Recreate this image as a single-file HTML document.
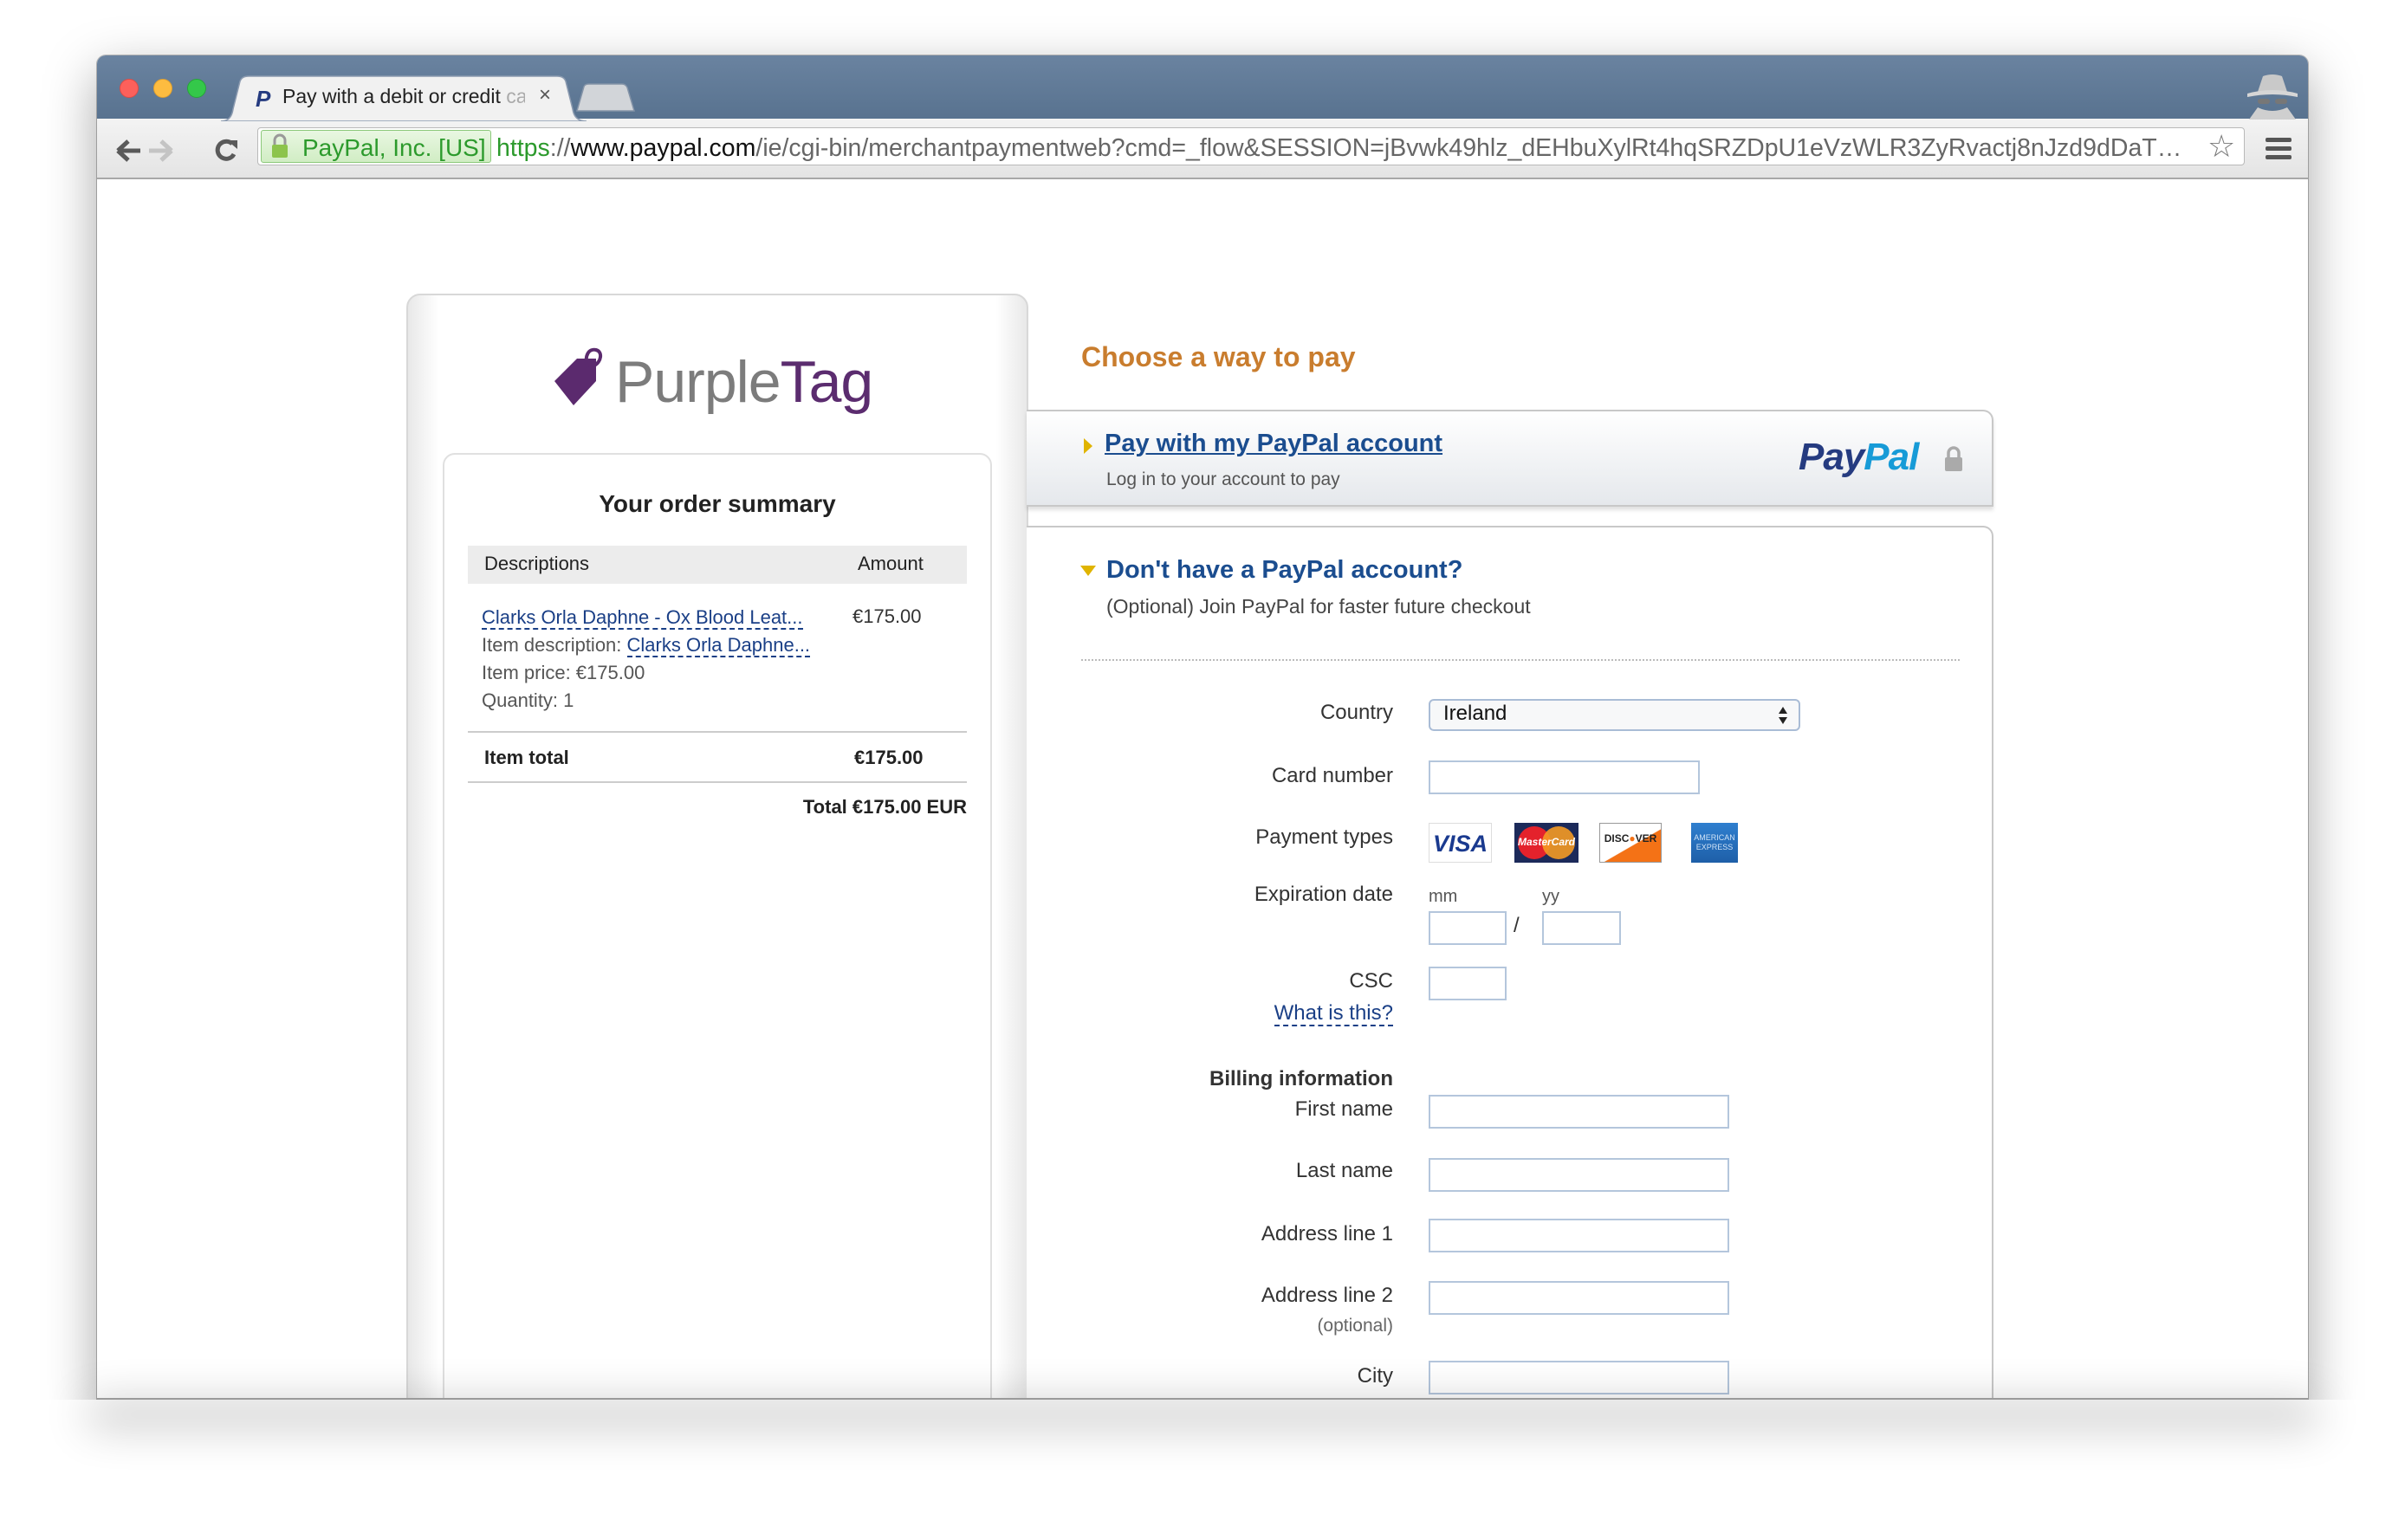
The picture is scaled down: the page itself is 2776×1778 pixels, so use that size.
<!DOCTYPE html>
<html><head><meta charset="utf-8"><style>
*{margin:0;padding:0;box-sizing:border-box}
body{width:2776px;height:1778px;background:#fff;font-family:"Liberation Sans",Arial,sans-serif;position:relative;overflow:hidden}
.a{position:absolute}
.win{left:112px;top:64px;width:2552px;height:1552px;border-radius:10px 10px 0 0;box-shadow:0 20px 60px rgba(0,0,0,.35),0 0 0 1px rgba(0,0,0,.25);overflow:hidden;background:#fff}
.lbl{position:absolute;right:1168px;font-size:24px;color:#333;text-align:right;white-space:nowrap}
.inp{position:absolute;left:1649px;border:2px solid #b4c6dc;background:#fff}
.lk{color:#1a3f86;border-bottom:2px dashed #1a3f86}
</style></head><body>
<div class="a win">
 <div class="a" style="left:0;top:0;width:2552px;height:74px;background:linear-gradient(#6a83a0,#58728f)"></div>
 <div class="a" style="left:0;top:73px;width:2552px;height:70px;background:linear-gradient(#f3f3f3,#e4e4e4);border-bottom:2px solid #a8a8a8"></div>
</div>
<!-- traffic lights -->
<div class="a" style="left:138px;top:91px;width:22px;height:22px;border-radius:50%;background:#fc605b;border:1px solid #de4a45"></div>
<div class="a" style="left:177px;top:91px;width:22px;height:22px;border-radius:50%;background:#fdbc40;border:1px solid #de9f30"></div>
<div class="a" style="left:216px;top:91px;width:22px;height:22px;border-radius:50%;background:#34c84a;border:1px solid #27a33a"></div>
<!-- tab -->
<svg class="a" style="left:255px;top:86px" width="425" height="54"><path d="M0 54 Q12 54 14 40 L22 8 Q24 2 32 2 L388 2 Q396 2 398 8 L406 40 Q408 54 422 54 Z" fill="#f1f1f1" stroke="#8c9bb0" stroke-width="1.5"/></svg>
<svg class="a" style="left:664px;top:96px" width="70" height="34"><path d="M2 32 L10 4 Q11 1 16 1 L54 1 Q58 1 60 5 L68 32 Z" fill="#d2d5d9" stroke="#8594a8" stroke-width="1.5"/></svg>
<div class="a" style="left:295px;top:99px;font:italic bold 26px 'Liberation Sans',sans-serif;color:#253b80">P</div>
<div class="a" style="left:326px;top:98px;font-size:23px;color:#222;white-space:nowrap;width:280px;overflow:hidden">Pay with a debit or credit <span style="color:#aaa">ca</span></div>
<div class="a" style="left:622px;top:96px;font-size:24px;color:#555">×</div>
<!-- incognito -->
<svg class="a" style="left:2588px;top:84px" width="70" height="54"><path d="M18 22 L24 4 Q35 0 46 4 L52 22 Z" fill="#c9c9c9"/><path d="M6 24 Q35 16 64 24 L64 28 Q35 22 6 28Z" fill="#d6d6d6"/><rect x="18" y="30" width="14" height="6" rx="3" fill="#777"/><rect x="38" y="30" width="14" height="6" rx="3" fill="#777"/><path d="M8 54 L18 40 Q35 48 52 40 L62 54Z" fill="#cfcfcf"/></svg>
<!-- toolbar icons -->
<svg class="a" style="left:132px;top:160px" width="150" height="30"><path d="M4 14 L16 3 M4 14 L16 25 M4 14 L30 14" stroke="#5a5a5a" stroke-width="5" fill="none"/><path d="M86 14 L74 3 M86 14 L74 25 M86 14 L60 14" stroke="#c4c4c4" stroke-width="5" fill="none" transform="translate(-20,0)"/><path d="M136 6 A10 10 0 1 0 138 18" stroke="#5a5a5a" stroke-width="5" fill="none"/><path d="M130 2 L142 2 L142 12Z" fill="#5a5a5a"/></svg>
<div class="a" style="left:297px;top:147px;width:2294px;height:44px;background:#fff;border:1px solid #b9b9b9;border-radius:4px"></div>
<div class="a" style="left:301px;top:150px;width:266px;height:38px;background:linear-gradient(#e9f7e2,#d1edc4);border:1px solid #8cc97b;border-radius:3px"></div>
<svg class="a" style="left:312px;top:154px" width="22" height="30"><path d="M5 13 V8 A6 6 0 0 1 17 8 V13" stroke="#999" stroke-width="3" fill="none"/><rect x="2" y="13" width="18" height="15" rx="2" fill="#8cc44c"/></svg>
<div class="a" style="left:349px;top:155px;font-size:28px;color:#2c9a2c;white-space:nowrap">PayPal, Inc. [US]</div>
<div class="a" style="left:573px;top:155px;font-size:28.5px;color:#666;white-space:nowrap;width:1960px;overflow:hidden"><span style="color:#2c9a2c">https</span>://<span style="color:#111">www.paypal.com</span>/ie/cgi-bin/merchantpaymentweb?cmd=_flow&amp;SESSION=jBvwk49hlz_dEHbuXylRt4hqSRZDpU1eVzWLR3ZyRvactj8nJzd9dDaT…</div>
<div class="a" style="left:2548px;top:148px;font-size:36px;color:#777">☆</div>
<div class="a" style="left:2615px;top:159px;width:30px;height:5px;background:#555;border-radius:2px"></div>
<div class="a" style="left:2615px;top:169px;width:30px;height:5px;background:#555;border-radius:2px"></div>
<div class="a" style="left:2615px;top:179px;width:30px;height:5px;background:#555;border-radius:2px"></div>

<!-- left card -->
<div class="a" style="left:469px;top:339px;width:718px;height:1300px;border:2px solid #d8d8d8;border-radius:16px 16px 0 0;background:linear-gradient(to right,#e8e8e8,#fff 5%,#fff 95%,#e8e8e8)"></div>
<svg class="a" style="left:638px;top:400px" width="75" height="72"><path d="M2 40 L28 14 L50 14 L50 40 L24 68 Z" fill="#5b2a6e"/><path d="M40 24 C36 10 42 2 50 4 C58 6 56 18 48 22" stroke="#5b2a6e" stroke-width="4" fill="none"/></svg>
<div class="a" style="left:710px;top:402px;font-size:68px;color:#7c7c7c;white-space:nowrap;letter-spacing:-1px">Purple<span style="color:#5b2c6f">Tag</span></div>
<div class="a" style="left:511px;top:523px;width:634px;height:1120px;border:2px solid #e0e0e0;border-radius:14px 14px 0 0;background:#fff"></div>
<div class="a" style="left:511px;top:566px;width:634px;text-align:center;font-size:28px;font-weight:bold;color:#222">Your order summary</div>
<div class="a" style="left:540px;top:630px;width:576px;height:44px;background:#ececec"></div>
<div class="a" style="left:559px;top:638px;font-size:22px;color:#222">Descriptions</div>
<div class="a" style="left:990px;top:638px;font-size:22px;color:#222">Amount</div>
<div class="a" style="left:556px;top:697px;font-size:22px;line-height:32px;color:#555;white-space:nowrap">
<span class="lk">Clarks Orla Daphne - Ox Blood Leat...</span><br>Item description: <span class="lk">Clarks Orla Daphne...</span><br>Item price: €175.00<br>Quantity: 1</div>
<div class="a" style="left:984px;top:699px;font-size:22px;color:#333">€175.00</div>
<div class="a" style="left:540px;top:844px;width:576px;height:2px;background:#ccc"></div>
<div class="a" style="left:559px;top:862px;font-size:22px;font-weight:bold;color:#222">Item total</div>
<div class="a" style="left:986px;top:862px;font-size:22px;font-weight:bold;color:#222">€175.00</div>
<div class="a" style="left:540px;top:902px;width:576px;height:2px;background:#ccc"></div>
<div class="a" style="left:540px;top:919px;width:576px;text-align:right;font-size:22px;font-weight:bold;color:#222">Total €175.00 EUR</div>

<!-- right -->
<div class="a" style="left:1248px;top:394px;font-size:32px;font-weight:bold;color:#c97d2e">Choose a way to pay</div>
<div class="a" style="left:1185px;top:473px;width:1116px;height:112px;border:2px solid #c8c8c8;border-left:none;border-radius:0 12px 0 0;background:linear-gradient(#fff,#e5e8ec);box-shadow:0 4px 4px rgba(0,0,0,.12)"></div>
<svg class="a" style="left:1250px;top:505px" width="12" height="20"><path d="M1 1 L11 10 L1 19Z" fill="#e0b400"/></svg>
<div class="a" style="left:1275px;top:496px;font-size:29px;font-weight:bold;color:#1b4d8f;text-decoration:underline;white-space:nowrap">Pay with my PayPal account</div>
<div class="a" style="left:1277px;top:542px;font-size:21px;color:#555">Log in to your account to pay</div>
<div class="a" style="left:2076px;top:503px;font:italic bold 44px 'Liberation Sans',sans-serif;color:#253b80;letter-spacing:-1px">Pay<span style="color:#179bd7">Pal</span></div>
<svg class="a" style="left:2244px;top:515px" width="22" height="30"><path d="M5 13 V8 A6 6 0 0 1 17 8 V13" stroke="#aaa" stroke-width="3.5" fill="none"/><rect x="1" y="13" width="20" height="16" rx="2" fill="#aaa"/></svg>

<div class="a" style="left:1185px;top:607px;width:1116px;height:1100px;border:2px solid #c8c8c8;border-left:none;border-radius:0 12px 0 0;background:#fff"></div>
<svg class="a" style="left:1246px;top:652px" width="20" height="14"><path d="M1 1 L19 1 L10 13Z" fill="#e0b400"/></svg>
<div class="a" style="left:1277px;top:642px;font-size:29px;font-weight:bold;color:#1b4d8f">Don't have a PayPal account?</div>
<div class="a" style="left:1277px;top:687px;font-size:23px;color:#444">(Optional) Join PayPal for faster future checkout</div>
<div class="a" style="left:1248px;top:761px;width:1014px;border-top:2px dotted #bbb"></div>

<div class="lbl" style="top:809px">Country</div>
<div class="a" style="left:1649px;top:807px;width:429px;height:37px;border:2px solid #a9bcd6;border-radius:6px;background:#f7f8f9"></div>
<div class="a" style="left:1666px;top:810px;font-size:24px;color:#111">Ireland</div>
<svg class="a" style="left:2052px;top:814px" width="12" height="24"><path d="M1 10 L6 2 L11 10Z M1 14 L6 22 L11 14Z" fill="#222"/></svg>

<div class="lbl" style="top:882px">Card number</div>
<div class="inp" style="top:878px;width:313px;height:39px"></div>

<div class="lbl" style="top:953px">Payment types</div>
<div class="a" style="left:1649px;top:950px;width:73px;height:46px;border:1px solid #ddd;background:#fff;font:italic bold 27px 'Liberation Sans',sans-serif;color:#1a3a8f;text-align:center;line-height:46px">VISA</div>
<div class="a" style="left:1748px;top:950px;width:74px;height:46px;background:#1c2a5a;overflow:hidden"><div class="a" style="left:4px;top:4px;width:38px;height:38px;border-radius:50%;background:#e4222c"></div><div class="a" style="left:32px;top:4px;width:38px;height:38px;border-radius:50%;background:#f59a23;opacity:.9"></div><div class="a" style="left:0;top:15px;width:74px;text-align:center;font:italic bold 12px 'Liberation Sans',sans-serif;color:#fff">MasterCard</div></div>
<div class="a" style="left:1846px;top:950px;width:72px;height:46px;border:1px solid #999;background:linear-gradient(150deg,#fff 55%,#f47216 56%);font:bold 12px 'Liberation Sans',sans-serif;color:#222;text-align:center;padding-top:10px">DISC<span style="color:#f47216">●</span>VER</div>
<div class="a" style="left:1952px;top:950px;width:54px;height:46px;background:linear-gradient(#2f7fcf,#1e5fa8);color:#cfe3f7;font-size:9px;text-align:center;padding-top:12px;line-height:11px">AMERICAN<br>EXPRESS</div>

<div class="lbl" style="top:1019px">Expiration date</div>
<div class="a" style="left:1649px;top:1024px;font-size:20px;color:#555">mm</div>
<div class="a" style="left:1780px;top:1024px;font-size:20px;color:#555">yy</div>
<div class="inp" style="top:1052px;width:90px;height:39px"></div>
<div class="a" style="left:1747px;top:1055px;font-size:24px;color:#333">/</div>
<div class="inp" style="left:1780px;top:1052px;width:91px;height:39px"></div>

<div class="lbl" style="top:1119px">CSC</div>
<div class="inp" style="top:1116px;width:90px;height:39px"></div>
<div class="lbl" style="top:1156px"><span class="lk">What is this?</span></div>

<div class="lbl" style="top:1232px;font-weight:bold">Billing information</div>
<div class="lbl" style="top:1267px">First name</div>
<div class="inp" style="top:1264px;width:347px;height:39px"></div>
<div class="lbl" style="top:1338px">Last name</div>
<div class="inp" style="top:1337px;width:347px;height:39px"></div>
<div class="lbl" style="top:1411px">Address line 1</div>
<div class="inp" style="top:1407px;width:347px;height:39px"></div>
<div class="lbl" style="top:1482px">Address line 2</div>
<div class="inp" style="top:1479px;width:347px;height:39px"></div>
<div class="lbl" style="top:1519px;font-size:21px;color:#666">(optional)</div>
<div class="lbl" style="top:1575px">City</div>
<div class="inp" style="top:1571px;width:347px;height:39px"></div>

<!-- cut off window bottom -->
<div class="a" style="left:0;top:1616px;width:2776px;height:162px;background:#fff"></div>
<div class="a" style="left:112px;top:1614px;width:2552px;height:2px;background:#9a9a9a;box-shadow:0 18px 50px 10px rgba(0,0,0,.3)"></div>
</body></html>
